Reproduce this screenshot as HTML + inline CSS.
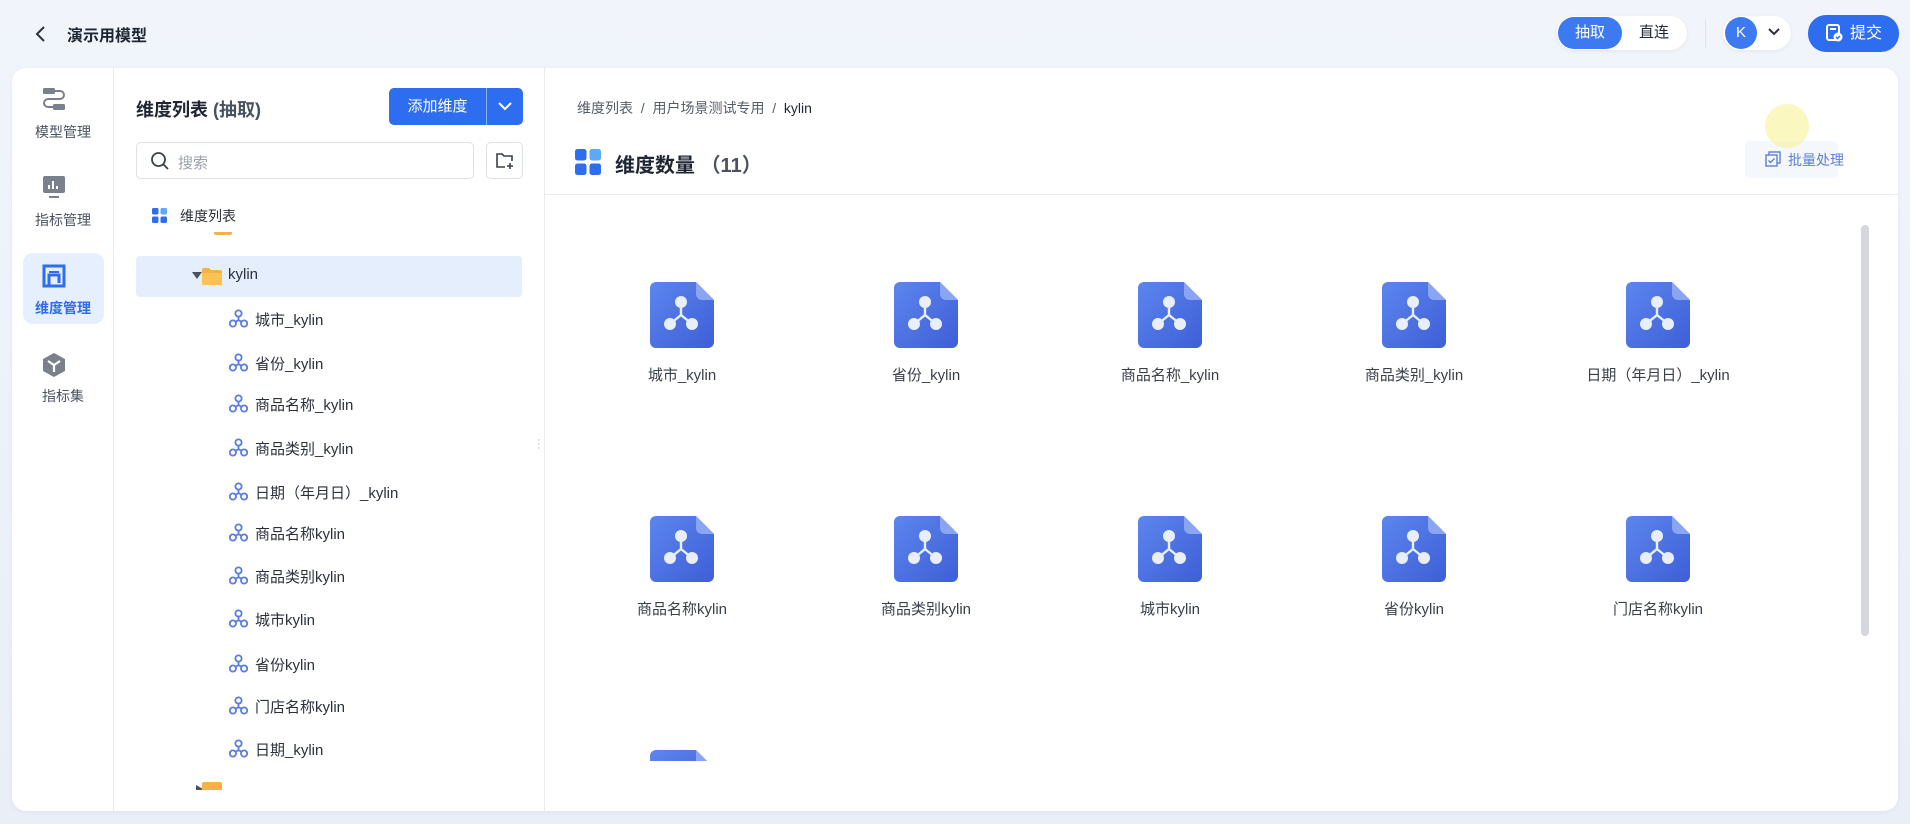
<!DOCTYPE html>
<html><head><meta charset="utf-8">
<style>
*{box-sizing:border-box;margin:0;padding:0}
body{width:1910px;height:824px;overflow:hidden;background:linear-gradient(180deg,#f1f5fb,#e9eef7);font-family:"Liberation Sans","Noto Sans CJK SC",sans-serif;color:#1f2633;position:relative}
.a{position:absolute}
.card{left:12px;top:68px;width:1886px;height:743px;background:#fff;border-radius:14px;overflow:hidden;box-shadow:0 1px 4px rgba(80,100,140,.08)}
.nav{left:0;top:0;width:102px;height:743px;border-right:1px solid #e8ebf0}
.nl{width:102px;text-align:center;font-size:14px;color:#4a5260}
.tree-row{font-size:15px;color:#2b313b;white-space:nowrap}
.lbl{font-size:15px;color:#3a404a;text-align:center;width:240px;white-space:nowrap}
</style></head><body>
<svg class="a" style="left:34px;top:25px" width="14" height="18" viewBox="0 0 14 18"><path d="M10 2 L3 9 L10 16" fill="none" stroke="#2b313b" stroke-width="2"/></svg>
<div class="a" style="left:67px;top:22px;font-size:16px;font-weight:bold;color:#1f2633">演示用模型</div>
<div class="a" style="left:1557px;top:16px;width:130px;height:34px;background:#fff;border-radius:17px;box-shadow:0 1px 4px rgba(0,0,0,.06)"></div>
<div class="a" style="left:1558px;top:17px;width:64px;height:32px;background:#3d7af2;border-radius:16px;color:#fff;font-size:15px;text-align:center;line-height:32px">抽取</div>
<div class="a" style="left:1622px;top:17px;width:64px;height:32px;color:#1f2633;font-size:15px;text-align:center;line-height:32px">直连</div>
<div class="a" style="left:1705px;top:20px;width:1px;height:28px;background:#dde2ea"></div>
<div class="a" style="left:1723px;top:16px;width:68px;height:34px;background:#fff;border-radius:17px;box-shadow:0 1px 4px rgba(0,0,0,.06)"></div>
<div class="a" style="left:1725px;top:17px;width:32px;height:32px;border-radius:16px;background:#3d7af2;color:#fff;font-size:15px;text-align:center;line-height:32px">K</div>
<svg class="a" style="left:1767px;top:27px" width="14" height="10" viewBox="0 0 14 10"><path d="M2 2 L7 7 L12 2" fill="none" stroke="#2b313b" stroke-width="2"/></svg>
<div class="a" style="left:1808px;top:15px;width:91px;height:37px;background:#2f6df0;border-radius:18px;color:#fff;font-size:16px;line-height:37px;padding-left:42px">提交</div>
<svg class="a" style="left:1825px;top:24px" width="18" height="18" viewBox="0 0 18 18"><rect x="2" y="1" width="12" height="15" rx="2" fill="none" stroke="#fff" stroke-width="2"/><path d="M5 5h6" stroke="#fff" stroke-width="2"/><circle cx="13" cy="13" r="4.5" fill="#fff"/><path d="M11 13l1.5 1.5L15 12" stroke="#2f6df0" stroke-width="1.5" fill="none"/></svg>

<div class="a card">
 <div class="a nav">
  <svg class="a" style="left:29px;top:18px" width="26" height="26" viewBox="0 0 26 26"><rect x="2" y="2" width="12" height="6" rx="1.5" fill="#7a818c"/><rect x="12" y="18" width="12" height="6" rx="1.5" fill="#7a818c"/><path d="M14 5h5a4 4 0 0 1 0 8H7a4 4 0 0 0 0 8h5" fill="none" stroke="#7a818c" stroke-width="2"/></svg>
  <div class="a nl" style="top:54px">模型管理</div>
  <svg class="a" style="left:29px;top:106px" width="26" height="26" viewBox="0 0 26 26"><rect x="2" y="2" width="22" height="17" rx="2" fill="#7a818c"/><rect x="8" y="22" width="10" height="2" fill="#7a818c"/><path d="M8 15v-4M12 15V7M16 15v-3" stroke="#fff" stroke-width="2"/></svg>
  <div class="a nl" style="top:142px">指标管理</div>
  <div class="a" style="left:11px;top:185px;width:81px;height:71px;background:#e6effd;border-radius:10px"></div>
  <svg class="a" style="left:29px;top:195px" width="26" height="26" viewBox="0 0 26 26"><path d="M3 3h20v20H3z" fill="none" stroke="#2f6df0" stroke-width="3"/><path d="M8 23V12h10v8" fill="none" stroke="#2f6df0" stroke-width="3"/><rect x="8" y="8" width="10" height="2" fill="#2f6df0"/></svg>
  <div class="a nl" style="top:230px;color:#2f6df0;font-weight:bold">维度管理</div>
  <svg class="a" style="left:29px;top:284px" width="26" height="26" viewBox="0 0 26 26"><path d="M13 1 L24 7 V19 L13 25 L2 19 V7 Z" fill="#7a818c"/><path d="M7 9l6 4 6-4M13 13v7" stroke="#fff" stroke-width="2.2" fill="none"/></svg>
  <div class="a nl" style="top:318px">指标集</div>
 </div>

 <div class="a" style="left:124px;top:28px;font-size:18px;font-weight:bold;color:#1f2633">维度列表 <span style="color:#4a5260">(抽取)</span></div>
 <div class="a" style="left:377px;top:20px;width:134px;height:37px;background:#2f6df0;border-radius:5px"></div>
 <div class="a" style="left:377px;top:20px;width:97px;height:37px;color:#fff;font-size:15px;text-align:center;line-height:37px">添加维度</div>
 <div class="a" style="left:474px;top:20px;width:1px;height:37px;background:#8fb0f7"></div>
 <svg class="a" style="left:485px;top:33px" width="16" height="10" viewBox="0 0 16 10"><path d="M2 2 L8 8 L14 2" fill="none" stroke="#fff" stroke-width="2"/></svg>
 <div class="a" style="left:124px;top:74px;width:338px;height:37px;border:1px solid #dde1e8;border-radius:5px"></div>
 <svg class="a" style="left:138px;top:83px" width="20" height="20" viewBox="0 0 20 20"><circle cx="8.5" cy="8.5" r="6.5" fill="none" stroke="#3a404a" stroke-width="1.8"/><path d="M13.5 13.5 L18 18" stroke="#3a404a" stroke-width="1.8"/></svg>
 <div class="a" style="left:166px;top:84px;font-size:15px;color:#9aa1ab">搜索</div>
 <div class="a" style="left:474px;top:74px;width:37px;height:37px;border:1px solid #dde1e8;border-radius:5px"></div>
 <svg class="a" style="left:483px;top:83px" width="20" height="20" viewBox="0 0 20 20"><path d="M10 16H2V3h5l2 2h8v5" fill="none" stroke="#3a404a" stroke-width="1.6"/><path d="M15 12v6M12 15h6" stroke="#3a404a" stroke-width="1.6"/></svg>
 <svg class="a" style="left:140px;top:140px" width="15" height="15" viewBox="0 0 15 15"><rect x="0" y="0" width="6.5" height="6.5" rx="1.5" fill="#2f6df0"/><rect x="8.5" y="0" width="6.5" height="6.5" rx="1.5" fill="#5aaaf5"/><rect x="0" y="8.5" width="6.5" height="6.5" rx="1.5" fill="#2f6df0"/><rect x="8.5" y="8.5" width="6.5" height="6.5" rx="1.5" fill="#2f6df0"/></svg>
 <div class="a tree-row" style="left:168px;top:138px;font-size:14px">维度列表</div>
 <div class="a" style="left:100px;top:164px;width:432px;height:558px;overflow:hidden">
  <div class="a" style="left:102px;top:-6px;width:18px;height:9px;background:#f6b343;border-radius:2px"></div>
  <div class="a" style="left:110px;top:-8px;width:60px;height:10px;color:#444;font-size:12px;overflow:hidden;line-height:4px">......</div>
  <div class="a" style="left:24px;top:24px;width:386px;height:41px;background:#e4eefc;border-radius:4px"></div>
  <svg class="a" style="left:80px;top:40px" width="10" height="8" viewBox="0 0 10 8"><path d="M0 0h10L5 7z" fill="#4a5260"/></svg>
  <svg class="a" style="left:90px;top:36px" width="20" height="17" viewBox="0 0 20 17"><path d="M0 2a2 2 0 0 1 2-2h5l2 2h9a2 2 0 0 1 2 2v11a2 2 0 0 1-2 2H2a2 2 0 0 1-2-2z" fill="#f6b343"/><rect x="0" y="5" width="20" height="12" rx="1.5" fill="#fbc356"/></svg>
  <div class="a tree-row" style="left:116px;top:34px">kylin</div>
 </div>
 <div class="a" style="left:100px;top:164px;width:432px;height:558px;overflow:hidden" id="kids"></div>
 <div class="a" style="left:532px;top:0;width:1px;height:743px;background:#e8ebf0"></div>
 <div class="a" style="left:525px;top:370px;font-size:11px;color:#aab;line-height:4px">·<br>·<br>·</div>

 <div class="a" style="left:565px;top:30px;font-size:14px;color:#555d69">维度列表 &nbsp;/&nbsp; 用户场景测试专用 &nbsp;/&nbsp; <span style="color:#1f2633">kylin</span></div>
 <svg class="a" style="left:563px;top:81px" width="26" height="26" viewBox="0 0 26 26"><rect x="0" y="0" width="11.5" height="11.5" rx="2.5" fill="#2f6df0"/><rect x="14.5" y="0" width="11.5" height="11.5" rx="2.5" fill="#5aaaf5"/><rect x="0" y="14.5" width="11.5" height="11.5" rx="2.5" fill="#2f6df0"/><rect x="14.5" y="14.5" width="11.5" height="11.5" rx="2.5" fill="#2f6df0"/></svg>
 <div class="a" style="left:603px;top:81px;font-size:20px;font-weight:bold;color:#1f2633">维度数量 <span style="color:#4a5260">（11）</span></div>
 <div class="a" style="left:1733px;top:73px;width:93px;height:37px;background:#f4f7fc;border-radius:5px"></div>
 <div class="a" style="left:1753px;top:36px;width:44px;height:44px;border-radius:22px;background:rgba(245,240,140,.55)"></div>
 <svg class="a" style="left:1753px;top:83px" width="16" height="16" viewBox="0 0 16 16"><rect x="4" y="1" width="11" height="11" fill="none" stroke="#5c7fd6" stroke-width="1.4"/><rect x="1" y="4" width="11" height="11" fill="#f4f7fc" stroke="#5c7fd6" stroke-width="1.4"/><path d="M3.5 9.5l2 2 4-4" fill="none" stroke="#5c7fd6" stroke-width="1.4"/></svg>
 <div class="a" style="left:1776px;top:82px;font-size:14px;color:#5c7fd6">批量处理</div>
 <div class="a" style="left:533px;top:126px;width:1353px;height:1px;background:#e8ebf0"></div>
 <div class="a" style="left:1849px;top:157px;width:8px;height:411px;border-radius:4px;background:#d4d7db"></div>
 <div class="a" style="left:533px;top:127px;width:1310px;height:566px;overflow:hidden" id="grid"></div>
</div>
<script>
(function(){
var kids=["城市_kylin","省份_kylin","商品名称_kylin","商品类别_kylin","日期（年月日）_kylin","商品名称kylin","商品类别kylin","城市kylin","省份kylin","门店名称kylin","日期_kylin"];
var ys=[319,363,404,448,492,533,576,619,664,706,749];
var k=document.getElementById('kids'),h='';
var node='<svg width="19" height="19" viewBox="0 0 17 17"><circle cx="8.5" cy="4" r="2.8" fill="none" stroke="#5b7ce0" stroke-width="1.6"/><circle cx="3.5" cy="13" r="2.8" fill="none" stroke="#5b7ce0" stroke-width="1.6"/><circle cx="13.5" cy="13" r="2.8" fill="none" stroke="#5b7ce0" stroke-width="1.6"/><path d="M8.5 7v3M8.5 10L5.5 11.5M8.5 10l3 1.5" stroke="#5b7ce0" stroke-width="1.6" fill="none"/></svg>';
kids.forEach(function(t,i){var y=ys[i]-68-164;h+='<div class="a" style="left:117px;top:'+(y-10)+'px">'+node+'</div><div class="a tree-row" style="left:143px;top:'+(y-10)+'px">'+t+'</div>';});
h+='<svg class="a" style="left:84px;top:553px" width="8" height="8"><path d="M0 0l7 4-7 4z" fill="#4a5260"/></svg><div class="a" style="left:90px;top:550px;width:20px;height:10px;background:#f6b343;border-radius:2px"></div>';
k.innerHTML=h;
var labels=["城市_kylin","省份_kylin","商品名称_kylin","商品类别_kylin","日期（年月日）_kylin","商品名称kylin","商品类别kylin","城市kylin","省份kylin","门店名称kylin","x"];
var icon='<svg width="64" height="66" viewBox="0 0 64 66"><defs><linearGradient id="g" x1="0" y1="0" x2="1" y2="1"><stop offset="0" stop-color="#5c86ee"/><stop offset="1" stop-color="#3e5ed6"/></linearGradient></defs><path d="M6 0h40l18 18v42a6 6 0 0 1-6 6H6a6 6 0 0 1-6-6V6a6 6 0 0 1 6-6z" fill="url(#g)"/><path d="M46 0v12a6 6 0 0 0 6 6h12z" fill="#8aa5f3"/><circle cx="31" cy="20" r="6" fill="#e9eefb"/><circle cx="20" cy="42" r="6" fill="#e9eefb"/><circle cx="42" cy="42" r="6" fill="#e9eefb"/><path d="M31 20v13L20 42M31 33l11 9" stroke="#e9eefb" stroke-width="2.4" fill="none"/></svg>';
var g=document.getElementById('grid'),s='';
for(var i=0;i<11;i++){var c=i%5,r=Math.floor(i/5);var cx=682+c*244-12-533;var ty=282+r*234-68-127;
s+='<div class="a" style="left:'+(cx-32)+'px;top:'+ty+'px">'+icon+'</div>';
if(i<10)s+='<div class="a lbl" style="left:'+(cx-120)+'px;top:'+(ty+82)+'px">'+labels[i]+'</div>';}
g.innerHTML=s;
})();
</script>
</body></html>
